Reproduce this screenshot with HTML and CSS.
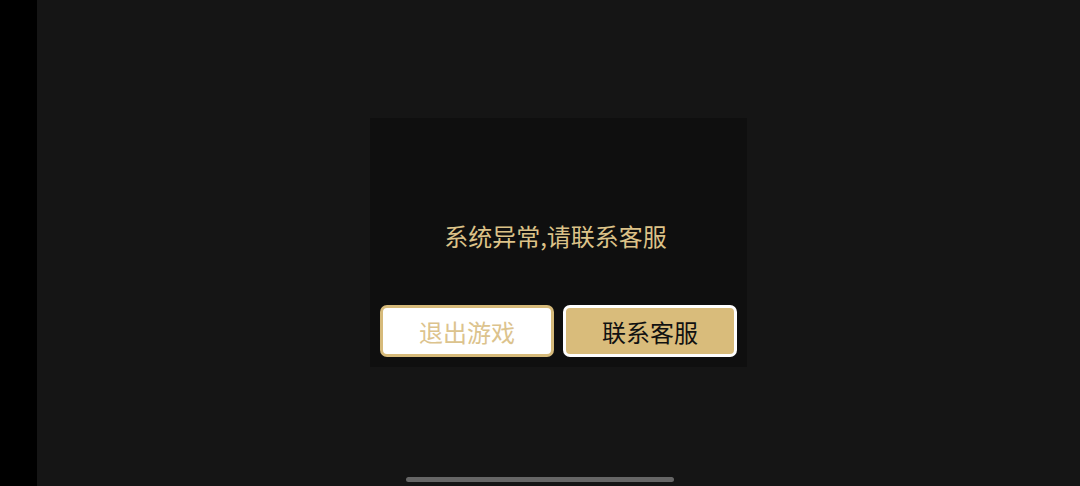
FILE: index.html
```html
<!DOCTYPE html>
<html lang="zh">
<head>
<meta charset="utf-8">
<link rel="stylesheet" href="styles.css">
</head>
<body>
<div class="screen">
  <div class="side"></div>
  <div class="main">
    <div class="dialog">
      <div class="msg">系统异常,请联系客服</div>
      <div class="actions">
        <div class="btn btn-exit">退出游戏</div>
        <div class="btn btn-contact">联系客服</div>
      </div>
    </div>
    <div class="home-bar"></div>
  </div>
</div>
</body>
</html>
```
FILE: styles.css
```css
html, body { margin: 0; padding: 0; }
body {
  width: 1080px; height: 486px; overflow: hidden;
  background: #151515;
  font-family: "Noto Sans CJK SC", "Noto Sans", sans-serif;
}
.screen { display: flex; width: 1080px; height: 486px; }
.side { width: 37px; background: #000; flex: none; }
.main {
  position: relative; flex: 1; background: #151515;
  display: flex; flex-direction: column; align-items: flex-start;
}
.dialog {
  margin: 118px 0 0 333px;
  width: 377px; height: 249px;
  background: #0f0f0f;
  box-sizing: border-box;
  padding: 0 10px;
  display: flex; flex-direction: column; align-items: stretch;
}
.msg {
  margin-top: 101px;
  height: 34px; line-height: 34px;
  text-align: center;
  color: #dcc288;
  font-size: 24px;
  font-weight: 400;
  padding-right: 6px;
}
.actions {
  margin-top: 52px;
  display: flex; gap: 9px;
}
.btn {
  width: 174px; height: 52px; box-sizing: border-box;
  border-radius: 7px; border: 3px solid;
  display: flex; align-items: center; justify-content: center;
  font-size: 24px;
  font-weight: 400;
}
.btn-exit { background: #fff; border-color: #d6ba7a; color: #dcc38d; }
.btn-contact { background: #d9bc7b; border-color: #fff; color: #111; }
.home-bar {
  position: absolute; left: 369px; top: 477px;
  width: 268px; height: 5px; border-radius: 3px; background: #666;
}
```
